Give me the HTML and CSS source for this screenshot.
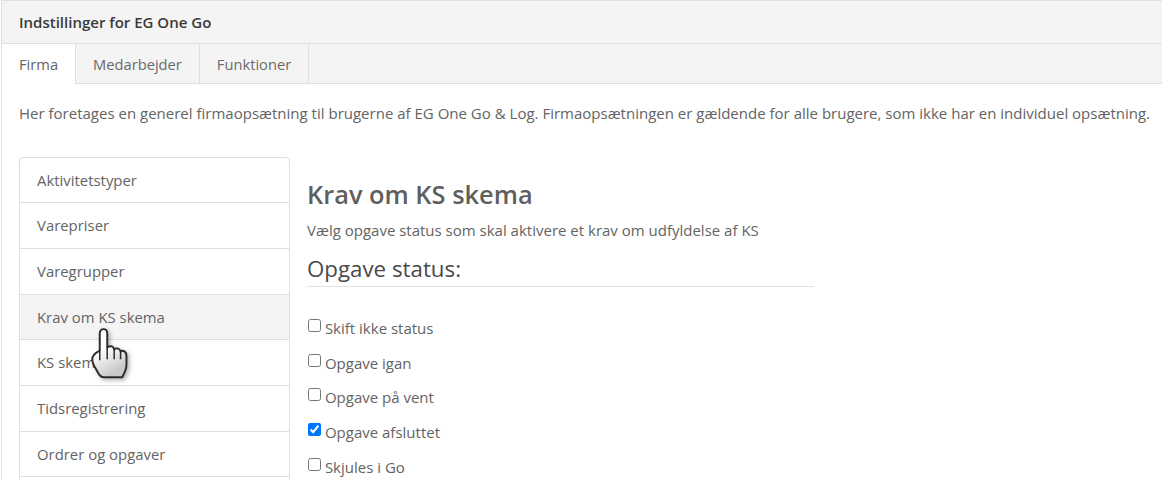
FILE: index.html
```html
<!DOCTYPE html>
<html lang="en">
    <head>
        <meta charset="UTF-8" />
        <meta name="viewport" content="width=device-width, initial-scale=1.0" />
        <title>Indstillinger for EG One Go</title>
        <link rel="stylesheet" href="styles.css">
    </head>
    <body>
        <div class="card">
            <div class="card-header">Indstillinger for EG One Go</div>
            <ul class="tabs">
                <li class="tab active">Firma</li>
                <li class="tab">Medarbejder</li>
                <li class="tab">Funktioner</li>
            </ul>
            <div class="card-body">
                <p class="intro">Her foretages en generel firmaopsætning til brugerne af EG One Go &amp; Log. Firmaopsætningen er gældende for alle brugere, som ikke har en individuel opsætning.</p>
                <div class="settings">
                    <ul class="side-menu">
                        <li>Aktivitetstyper</li>
                        <li>Varepriser</li>
                        <li>Varegrupper</li>
                        <li class="hover">Krav om KS skema</li>
                        <li>KS skemaer</li>
                        <li>Tidsregistrering</li>
                        <li>Ordrer og opgaver</li>
                    </ul>
                    <div class="content">
                        <h2>Krav om KS skema</h2>
                        <p class="lead">Vælg opgave status som skal aktivere et krav om udfyldelse af KS</p>
                        <h3>Opgave status:</h3>
                        <label class="check"><input type="checkbox" /> Skift ikke status</label>
                        <label class="check"><input type="checkbox" /> Opgave igan</label>
                        <label class="check"><input type="checkbox" /> Opgave på vent</label>
                        <label class="check"><input type="checkbox" checked /> Opgave afsluttet</label>
                        <label class="check"><input type="checkbox" /> Skjules i Go</label>
                    </div>
                </div>
            </div>
        </div>

        <!-- hand cursor over the menu -->
        <svg class="cursor" width="47" height="60" viewBox="0 0 44 56">
            <defs>
                <linearGradient id="handFill" x1="0" y1="0" x2="0.4" y2="1">
                    <stop offset="0.45" stop-color="#ffffff" />
                    <stop offset="1" stop-color="#c9c9c9" />
                </linearGradient>
            </defs>
            <path d="M9 42 C7 38 4 35 4 30 C4 26 7 24 11 22 L11 6 C11 0.5 18 0.5 18 6 L18 19 C21 17 24 18 24.5 21 C27 19 30 20 30.5 23 C33 21 36 23 36 27 L36 35 C36 40 34 43 32 47 L15 47 C12 47 10 44 9 42 Z" fill="url(#handFill)" stroke="#2b2b2b" stroke-width="1.8" stroke-linejoin="round" />
            <path d="M11 22 L11 31 M18 19 L18 30 M24.5 21 L24.5 30 M30.5 23 L30.5 30" fill="none" stroke="#2b2b2b" stroke-width="1.4" />
        </svg>
    </body>
</html>
```

FILE: styles.css
```css
html, body {
    height: 480px;
    overflow: hidden;
}

body {
    margin: 0;
    padding: 0 0 0 1px;
    font-family: "Open Sans", "Noto Sans", Arial, sans-serif;
    font-size: 15px;
    color: #646464;
    background: white;
    position: relative;
}

.card {
    height: 479px;
    overflow: hidden;
    border: 1px solid #dfdfdf;
    border-right: none;
    border-bottom: none;
}

.card-header {
    height: 42px;
    line-height: 42px;
    padding-left: 17px;
    background: #f4f4f4;
    border-bottom: 1px solid #dfdfdf;
    font-weight: 600;
    font-size: 15px;
    color: #3a3a3a;
}

.tabs {
    display: flex;
    list-style: none;
    margin: 0;
    padding: 0;
    height: 39px;
    background: #f4f4f4;
    border-bottom: 1px solid #dfdfdf;
}

.tab {
    padding: 0 17px;
    line-height: 40px;
    border-right: 1px solid #dfdfdf;
    color: #6b6b6b;
    font-size: 14.7px;
}

.tab.active {
    background: white;
    height: 40px;
    color: #646464;
}

.card-body {
    padding: 0 0 0 17px;
}

.intro {
    margin: 0;
    padding-top: 19px;
    height: 54px;
    line-height: 20px;
    white-space: nowrap;
    letter-spacing: 0.005px;
}

.settings {
    display: flex;
}

.side-menu {
    list-style: none;
    margin: 0;
    padding: 0;
    width: 269px;
    border: 1px solid #dfdfdf;
    border-radius: 4px;
}

.side-menu li {
    height: 44.7px;
    line-height: 45px;
    padding-left: 17px;
    border-bottom: 1px solid #dfdfdf;
    font-size: 14.9px;
}

.side-menu li:first-child {
    height: 44.2px;
}

.side-menu li.hover {
    background: #f4f4f4;
}

.content {
    margin-left: 17px;
    width: 507px;
}

.content h2 {
    margin: 21px 0 0;
    font-size: 25.4px;
    line-height: 32px;
    font-weight: 600;
    color: #5f5f5f;
}

.lead {
    margin: 10px 0 0;
    line-height: 20px;
    font-size: 15px;
}

.content h3 {
    margin: 15px 0 0;
    padding-bottom: 3px;
    font-size: 22.3px;
    line-height: 28px;
    font-weight: 400;
    color: #4a4a4a;
    border-bottom: 1px solid #e4e4e4;
}

.check {
    display: block;
    height: 34.7px;
    line-height: 34px;
    font-size: 15px;
}

.check:first-of-type {
    margin-top: 24px;
}

.check input {
    margin: 0 0 0 1px;
    vertical-align: 2px;
}

.cursor {
    position: absolute;
    left: 88px;
    top: 327px;
    filter: drop-shadow(2px 2px 2px rgba(0, 0, 0, 0.3));
}
```
